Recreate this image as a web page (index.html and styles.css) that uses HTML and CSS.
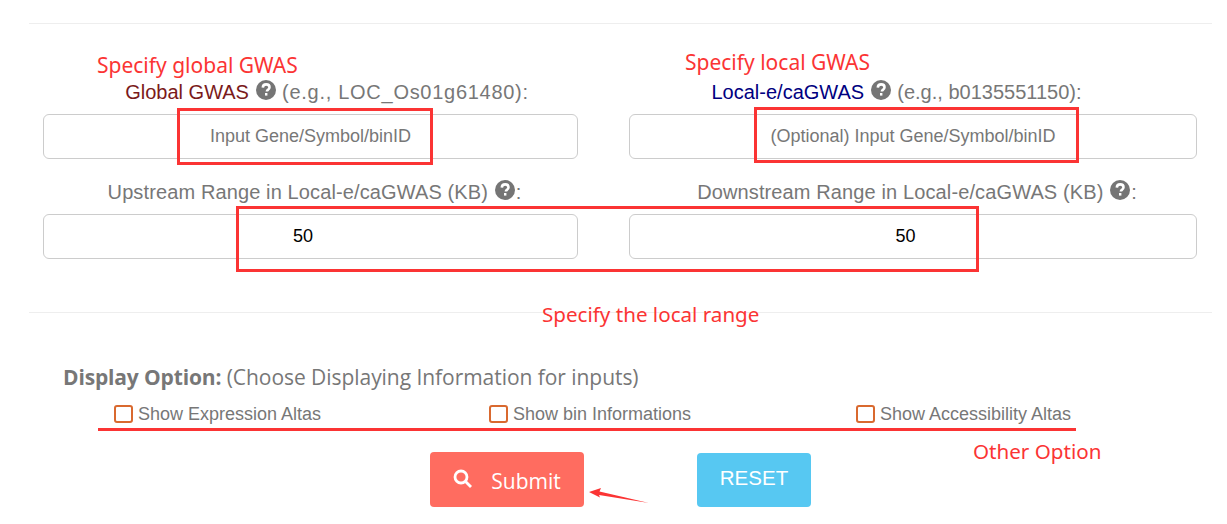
FILE: index.html
```html
<!DOCTYPE html>
<html lang="en">
<head>
<meta charset="utf-8">
<title>GWAS search</title>
<link rel="stylesheet" href="styles.css">
</head>
<body>
<main class="page">
  <hr class="rule rule-top">
  <form class="fields">
    <div class="field">
      <label class="label label-global"><span class="global">Global GWAS</span> <svg class="help" viewBox="0 0 20 20"><circle cx="10" cy="10" r="10"/><path d="M6.8 7.6c.1-2 1.5-3.2 3.4-3.2 2 0 3.3 1.2 3.3 2.9 0 1.3-.7 2-1.600 2.600-.8.5-1 .8-1 1.700" /><rect x="9" y="13" width="2.4" height="2.6"/></svg> <span class="eg-wide">(e.g., LOC_Os01g61480):</span></label>
      <input class="input" type="text" placeholder="Input Gene/Symbol/binID">
    </div>
    <div class="field">
      <label class="label label-local"><span class="local">Local-e/caGWAS</span> <svg class="help" viewBox="0 0 20 20"><circle cx="10" cy="10" r="10"/><path d="M6.8 7.6c.1-2 1.5-3.2 3.4-3.2 2 0 3.3 1.2 3.3 2.9 0 1.3-.7 2-1.600 2.600-.8.5-1 .8-1 1.700" /><rect x="9" y="13" width="2.4" height="2.6"/></svg> (e.g., b0135551150):</label>
      <input class="input" type="text" placeholder="(Optional) Input Gene/Symbol/binID">
    </div>
    <div class="field">
      <label class="label label-range">Upstream Range in Local-e/caGWAS (KB) <svg class="help" viewBox="0 0 20 20"><circle cx="10" cy="10" r="10"/><path d="M6.8 7.6c.1-2 1.5-3.2 3.4-3.2 2 0 3.3 1.2 3.3 2.9 0 1.3-.7 2-1.600 2.600-.8.5-1 .8-1 1.700" /><rect x="9" y="13" width="2.4" height="2.6"/></svg>:</label>
      <input class="input" type="number" value="50">
    </div>
    <div class="field">
      <label class="label label-range">Downstream Range in Local-e/caGWAS (KB) <svg class="help" viewBox="0 0 20 20"><circle cx="10" cy="10" r="10"/><path d="M6.8 7.6c.1-2 1.5-3.2 3.4-3.2 2 0 3.3 1.2 3.3 2.9 0 1.3-.7 2-1.600 2.600-.8.5-1 .8-1 1.700" /><rect x="9" y="13" width="2.4" height="2.6"/></svg>:</label>
      <input class="input" type="number" value="50">
    </div>
  </form>
  <hr class="rule rule-mid">
  <section class="options">
    <p class="options-title"><b>Display Option:</b> (Choose Displaying Information for inputs)</p>
    <div class="checks">
      <label class="check"><input type="checkbox">Show Expression Altas</label>
      <label class="check"><input type="checkbox">Show bin Informations</label>
      <label class="check"><input type="checkbox">Show Accessibility Altas</label>
    </div>
  </section>
  <div class="actions">
    <button class="btn submit" type="button"><svg class="search" viewBox="0 0 20 20"><circle cx="8" cy="8" r="6"/><path d="M12.500 12.500 18 18"/></svg>Submit</button>
    <button class="btn reset" type="button">RESET</button>
  </div>
</main>

<div class="note n-global">Specify global GWAS</div>
<div class="note n-local">Specify local GWAS</div>
<div class="note n-range">Specify the local range</div>
<div class="note n-other">Other Option</div>
<div class="box b-global"></div>
<div class="box b-local"></div>
<div class="box b-range"></div>
<div class="underline"></div>
<svg class="arrow" viewBox="0 0 62 16"><path d="M0 4 12 0 10.500 3.500 60 15 10 7 11 9.500z"/></svg>
</body>
</html>
```
FILE: styles.css
```css
* { box-sizing: border-box; }
html, body { margin: 0; padding: 0; background: #fff; }
body {
  position: relative;
  height: 524px;
  overflow: hidden;
  font-family: "Liberation Sans", Arial, sans-serif;
  color: #777;
}
.page { padding: 23px 15px 0 29px; }
.rule { border: 0; border-top: 1px solid #eee; margin: 0; }
.fields {
  display: grid;
  grid-template-columns: 535px 568px;
  column-gap: 51px;
  row-gap: 21px;
  padding: 56px 0 0 14px;
}
.field { display: flex; flex-direction: column; align-items: stretch; }
.label {
  display: block;
  height: 25px;
  margin-bottom: 9px;
  font-size: 20px;
  line-height: 25px;
  text-align: center;
  white-space: nowrap;
}
.label-global { padding-left: 33px; }
.label-local { padding-right: 33px; }
.label-range { padding-left: 8px; letter-spacing: 0.12px; }
.eg-wide { letter-spacing: 0.72px; }
.global { color: #7a1a1a; }
.local { color: #000080; }
.help { width: 20px; height: 20px; vertical-align: -1px; margin: 0 1px; }
.help circle { fill: #757575; }
.help path { fill: none; stroke: #fff; stroke-width: 2.6; }
.help rect { fill: #fff; }
.input {
  display: block;
  width: 100%;
  height: 45px;
  border: 1px solid #ccc;
  border-radius: 6px;
  background: #fff;
  padding: 6px 12px;
  font-family: inherit;
  font-size: 18px;
  color: #000;
  text-align: center;
  outline: 0;
}
.input::placeholder { color: #777; opacity: 1; }
.rule-mid { margin-top: 53px; }
.options { padding: 48px 0 0 34px; }
.options-title {
  margin: 0;
  height: 32px;
  font-family: "Open Sans", sans-serif;
  font-size: 21px;
  line-height: 32px;
  letter-spacing: -0.05px;
  color: #777;
}
.options-title b { letter-spacing: -0.15px; }
.checks {
  display: grid;
  grid-template-columns: 375px 367px auto;
  padding: 0 0 0 51px;
  margin-top: 11px;
}
.check { display: flex; align-items: center; height: 20px; font-size: 18px; white-space: nowrap; }
.check input {
  appearance: none;
  width: 19px;
  height: 18px;
  margin: 0 5px 0 0;
  border: 2px solid #d9692f;
  border-radius: 3px;
  background: #fff;
}
.actions { display: flex; padding: 28px 0 0 401px; align-items: flex-end; }
.btn { border: 0; border-radius: 4px; color: #fff; padding: 0; height: 55px; }
.submit {
  width: 154px;
  background: #ff6c60;
  font-family: "Open Sans", sans-serif;
  font-size: 21px;
  font-weight: 500;
  display: flex;
  align-items: center;
  justify-content: center;
  gap: 18px;
  padding-top: 2px;
}
.reset {
  width: 114px;
  height: 54px;
  margin-left: 113px;
  background: #57c8f2;
  font-family: inherit;
  font-size: 20.5px;
  padding-bottom: 4px;
}
.search { width: 20px; height: 20px; margin-top: -4px; }
.search circle, .search path { fill: none; stroke: #fff; stroke-width: 2.8; }

.note {
  position: absolute;
  color: #fb3434;
  font-family: "Noto Sans", sans-serif;
  font-size: 21px;
  line-height: 26px;
  white-space: nowrap;
}
.n-global { left: 97px; top: 52px; }
.n-local { left: 685px; top: 49px; }
.n-range { left: 542px; top: 301px; font-size: 20.6px; }
.n-other { left: 973px; top: 438px; font-size: 20.6px; }
.box { position: absolute; border: 3px solid #fb3434; }
.b-global { left: 177px; top: 108px; width: 256px; height: 57px; }
.b-local { left: 754px; top: 107px; width: 325px; height: 56px; }
.b-range { left: 236px; top: 206px; width: 743px; height: 66px; }
.underline { position: absolute; left: 98px; top: 428px; width: 978px; height: 3px; background: #fb3434; }
.arrow { position: absolute; left: 589px; top: 488px; width: 62px; height: 16px; }
.arrow path { fill: #fb3434; }
```
